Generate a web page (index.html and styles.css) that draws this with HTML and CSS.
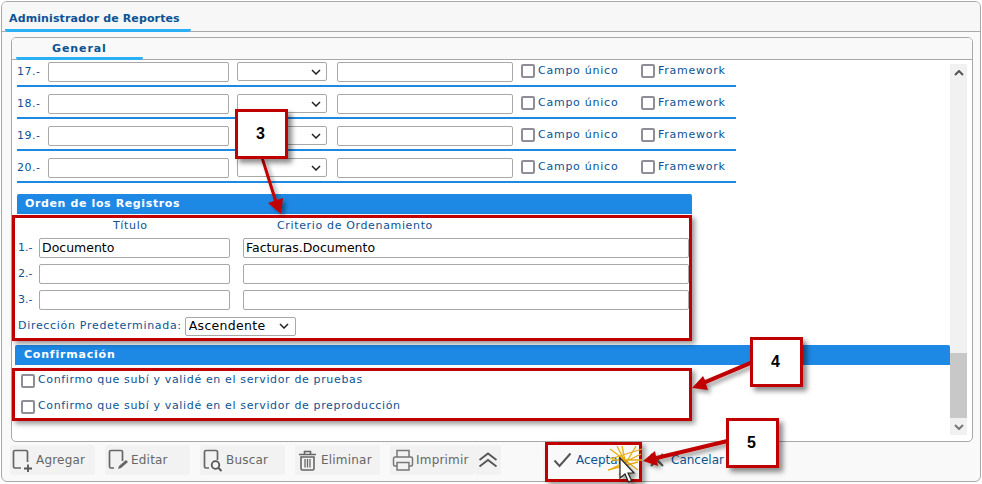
FILE: index.html
```html
<!DOCTYPE html>
<html lang="es">
<head>
<meta charset="utf-8">
<title>Administrador de Reportes</title>
<link rel="stylesheet" href="styles.css">
</head>
<body>
<div class="app">
  <div class="titlebar"><span class="tab-main">Administrador de Reportes</span></div>
  <div class="panel">
    <div class="tabs"><span class="tab-sub">General</span></div>
    <div class="scrollarea">
      <div class="content">
        <div class="field-rows">
          <div class="frow"><span class="num">17.-</span><input class="in-a"><select class="sel"></select><input class="in-b"><label class="chk chk1"><i></i>Campo único</label><label class="chk"><i></i>Framework</label></div>
          <div class="frow"><span class="num">18.-</span><input class="in-a"><select class="sel"></select><input class="in-b"><label class="chk chk1"><i></i>Campo único</label><label class="chk"><i></i>Framework</label></div>
          <div class="frow"><span class="num">19.-</span><input class="in-a"><select class="sel"></select><input class="in-b"><label class="chk chk1"><i></i>Campo único</label><label class="chk"><i></i>Framework</label></div>
          <div class="frow"><span class="num">20.-</span><input class="in-a"><select class="sel"></select><input class="in-b"><label class="chk chk1"><i></i>Campo único</label><label class="chk"><i></i>Framework</label></div>
        </div>
        <div class="sec sec-order">Orden de los Registros</div>
        <div class="order-head"><span class="oh1">Título</span><span class="oh2">Criterio de Ordenamiento</span></div>
        <div class="orow"><span class="onum">1.-</span><input class="o1" value="Documento"><input class="o2" value="Facturas.Documento"></div>
        <div class="orow"><span class="onum">2.-</span><input class="o1"><input class="o2"></div>
        <div class="orow"><span class="onum">3.-</span><input class="o1"><input class="o2"></div>
        <div class="dir"><span>Dirección Predeterminada:</span><select class="dirsel"><option>Ascendente</option></select></div>
        <div class="sec sec-conf">Confirmación</div>
        <label class="conf"><i></i>Confirmo que subí y validé en el servidor de pruebas</label>
        <label class="conf"><i></i>Confirmo que subí y validé en el servidor de preproducción</label>
      </div>
      <div class="scrollbar">
        <div class="sb-btn"><svg width="10" height="6" viewBox="0 0 10 6"><path d="M1 5l4-4 4 4" fill="none" stroke="#555" stroke-width="2"/></svg></div>
        <div class="sb-track"><div class="sb-thumb"></div></div>
        <div class="sb-btn"><svg width="10" height="6" viewBox="0 0 10 6"><path d="M1 1l4 4 4-4" fill="none" stroke="#777" stroke-width="2"/></svg></div>
      </div>
    </div>
  </div>
  <div class="toolbar">
    <div class="tool"><svg width="22" height="24" viewBox="0 0 22 24"><path d="M9 20H3a1.500 1.500 0 0 1-1.500-1.500V4A1.500 1.500 0 0 1 3 2.500h11A1.500 1.500 0 0 1 15.500 4v10" fill="none" stroke="#666" stroke-width="1.700"/><path d="M12 20.500h8M16 16.500v8" stroke="#555" stroke-width="1.800"/></svg><span>Agregar</span></div>
    <div class="tool"><svg width="22" height="24" viewBox="0 0 22 24"><path d="M7 20H4a1.500 1.500 0 0 1-1.500-1.500V4A1.500 1.500 0 0 1 4 2.500h10A1.500 1.500 0 0 1 15.500 4v9" fill="none" stroke="#666" stroke-width="1.700"/><path d="M11 21l1-3 7-6 2 2-7 6z" fill="#666"/></svg><span>Editar</span></div>
    <div class="tool"><svg width="22" height="24" viewBox="0 0 22 24"><path d="M7 20H4a1.500 1.500 0 0 1-1.500-1.500V4A1.500 1.500 0 0 1 4 2.500h10A1.500 1.500 0 0 1 15.500 4v8" fill="none" stroke="#666" stroke-width="1.700"/><circle cx="13.500" cy="17" r="3.800" fill="none" stroke="#555" stroke-width="1.800"/><path d="M16.500 20l3 3" stroke="#555" stroke-width="2"/></svg><span>Buscar</span></div>
    <div class="tool"><svg width="22" height="24" viewBox="0 0 22 24"><path d="M2 6.500h17M7.500 6V3.500h6V6" fill="none" stroke="#666" stroke-width="1.600"/><path d="M4 9h13v11.500a1.500 1.500 0 0 1-1.500 1.500h-10A1.500 1.500 0 0 1 4 20.500z" fill="none" stroke="#666" stroke-width="1.600"/><path d="M8 11v8.500M10.500 11v8.500M13 11v8.500" stroke="#666" stroke-width="1.300"/></svg><span>Eliminar</span></div>
    <div class="tool tool-print"><svg width="22" height="24" viewBox="0 0 22 24"><path d="M5 9V2.500h12V9" fill="none" stroke="#777" stroke-width="1.500"/><path d="M5 18H3a1.500 1.500 0 0 1-1.500-1.500v-6A1.500 1.500 0 0 1 3 9h16a1.500 1.500 0 0 1 1.500 1.500v6A1.500 1.500 0 0 1 19 18h-2" fill="none" stroke="#777" stroke-width="1.500"/><path d="M5 14.500h12v7.500H5z" fill="none" stroke="#777" stroke-width="1.500"/></svg><span>Imprimir</span></div>
    <div class="tool tool-more"><svg width="20" height="16" viewBox="0 0 20 16"><path d="M1.500 8l8.500-6.500L18.500 8M1.500 14.500L10 8l8.500 6.500" fill="none" stroke="#555" stroke-width="1.800"/></svg></div>
    <div class="actions">
      <div class="act"><svg width="20" height="16" viewBox="0 0 20 16"><path d="M1.500 8.500l5 5.500 11-12.500" fill="none" stroke="#555" stroke-width="2"/></svg><span>Aceptar</span></div>
      <div class="act act-cancel"><svg width="16" height="16" viewBox="0 0 16 16"><path d="M2 2l12 12M14 2L2 14" fill="none" stroke="#555" stroke-width="2"/></svg><span>Cancelar</span></div>
    </div>
  </div>
</div>

<div class="mark mark-3"></div>
<div class="mark mark-4"></div>
<div class="mark mark-5"></div>
<svg class="overlay" width="982" height="484" viewBox="0 0 982 484">
  <defs><filter id="sh" x="-30%" y="-30%" width="170%" height="170%"><feDropShadow dx="3" dy="3" stdDeviation="2" flood-color="#000" flood-opacity=".4"/></filter></defs>
  <g filter="url(#sh)" fill="#c00000">
    <path d="M261 159L264 159L277 200L283 198L281 214L268 203L274 201Z"/>
    <path d="M750 361L751 365L706 384L708 390L692 388L703 376L705 380Z"/>
    <path d="M727 439L728 443L657 460L658 466L643 461L655 451L656 456Z"/>
  </g>
  <g stroke="#e8ad12" stroke-width="1.300">
    <path d="M610 449l28 21M622 446l6 30M636 446l-17 29M641 454l-30 15M612 460h30M617 446l14 28M642 449l-32 10M608 470l30-8"/>
  </g>
  <path d="M620 458v20l5-4 3.500 8 3-1.500-3.500-7.500h6z" fill="#fff" stroke="#222" stroke-width="1.200" filter="url(#sh)"/>
</svg>
<div class="callout c3">3</div>
<div class="callout c4">4</div>
<div class="callout c5">5</div>
</body>
</html>
```
FILE: styles.css
```css
* { box-sizing: border-box; }
html, body { margin: 0; padding: 0; }
body { width: 982px; height: 484px; overflow: hidden; background: #fff; position: relative; font-family: "DejaVu Sans", Verdana, sans-serif; font-size: 11px; color: #0b5394; }
input, select { font-family: "DejaVu Sans", Verdana, sans-serif; margin: 0; background: #fff; outline: none; flex: none; }
select { appearance: none; background: #fff url("data:image/svg+xml,%3Csvg xmlns='http://www.w3.org/2000/svg' width='10' height='6'%3E%3Cpath d='M1 1l4 4 4-4' fill='none' stroke='%23222' stroke-width='1.500'/%3E%3C/svg%3E") no-repeat right 5px center; }

.app { margin: 1px 0 0 1px; width: 980px; height: 481px; border: 1px solid #a8a8a8; border-radius: 6px; background: #f9f9f9; display: flex; flex-direction: column; overflow: hidden; }
.titlebar { height: 30px; flex: none; border-bottom: 1px solid #a8a8a8; background: #f7f7f7; padding-left: 3px; display: flex; align-items: flex-end; }
.tab-main { width: 186px; height: 29px; margin-bottom: -1px; padding: 9px 0 0 4px; font-weight: bold; font-size: 11px; letter-spacing: .12px; color: #0b5394; border-bottom: 3px solid #29b0f5; border-radius: 0 0 3px 3px; white-space: nowrap; }

.panel { margin: 5px 7px 0 9px; height: 405px; flex: none; border: 1px solid #a8a8a8; border-radius: 5px; background: #fff; display: flex; flex-direction: column; overflow: hidden; }
.tabs { height: 22px; flex: none; border-bottom: 1px solid #a8a8a8; background: #f9f9f9; padding-left: 4px; }
.tab-sub { display: block; width: 127px; height: 22px; padding: 4px 0 0 36px; font-weight: bold; font-size: 11px; letter-spacing: .9px; color: #0b5394; border-bottom: 3px solid #29b0f5; border-radius: 0 0 3px 3px; }

.scrollarea { flex: 1; min-height: 0; position: relative; overflow: hidden; display: flex; padding-top: 4px; }
.content { width: 938px; flex: none; height: 400px; margin-top: -4px; }
.scrollbar { width: 17px; flex: none; height: 371px; display: flex; flex-direction: column; background: #f1f1f1; }
.sb-btn { height: 17px; flex: none; display: flex; align-items: center; justify-content: center; }
.sb-track { flex: 1; display: flex; flex-direction: column; justify-content: flex-end; }
.sb-thumb { height: 65px; background: #c8c8c8; }

.field-rows { width: 719px; margin-left: 5px; margin-top: -5px; }
.frow { height: 32px; border-bottom: 2px solid #1e88e5; display: flex; align-items: flex-start; padding-top: 7px; }
.num { width: 31px; line-height: 18px; letter-spacing: .5px; flex: none; margin-top: 1px; }
.frow input, .frow select { height: 20px; border: 1px solid #a8a8a8; border-radius: 2px; }
.in-a { width: 181px; }
.sel { width: 90px; margin-left: 8px !important; height: 19px !important; font-size: 12px; color: #000; }
.in-b { width: 176px; margin-left: 10px !important; }
.chk { display: flex; align-items: flex-start; line-height: 16px; letter-spacing: .75px; white-space: nowrap; margin-top: 1px; }
.chk i, .conf i { display: block; width: 14px; height: 14px; flex: none; border: 2px solid #8e8e98; border-radius: 2px; background: #fff; }
.chk i { margin: 1px 3px 0 -1px; }
.chk1 { width: 120px; margin-left: 9px; }

.sec { height: 20px; background: #1e88e5; color: #fff; font-weight: bold; font-size: 11px; letter-spacing: .8px; line-height: 19px; border-radius: 2px 2px 0 0; }
.sec-order { width: 675px; margin: 11px 0 0 5px; padding-left: 8px; letter-spacing: .62px; }
.order-head { height: 24px; padding-top: 5px; line-height: 14px; letter-spacing: .65px; display: flex; }
.oh1 { margin-left: 101px; width: 164px; }
.oh2 { white-space: nowrap; }
.orow { height: 26px; display: flex; align-items: flex-start; margin-left: 6px; }
.onum { width: 21px; line-height: 20px; flex: none; }
.orow input { height: 20px; border: 1px solid #a8a8a8; border-radius: 2px; font-size: 12.500px; color: #000; padding: 0 2px 2px; }
.o1 { width: 191px; }
.o2 { width: 446px; margin-left: 13px !important; }
.dir { display: flex; align-items: center; margin: 0 0 0 6px; height: 20px; letter-spacing: .69px; white-space: nowrap; }
.dir span { margin-top: -2px; }
.dirsel { width: 111px; height: 19px; margin-left: 3px; padding: 0 0 2px 3px; font-size: 12.500px; color: #000; border: 1px solid #a8a8a8; border-radius: 2px; letter-spacing: .3px; background-position: right 6px center; }
.sec-conf { width: 935px; margin: 9px 0 0 3px; padding-left: 9px; }
.conf { display: flex; align-items: flex-start; height: 26px; margin-left: 9px; line-height: 14px; letter-spacing: .64px; white-space: nowrap; }
.conf i { margin: 1px 3px 0 0; }
.conf:first-of-type { margin-top: 8px; }

.toolbar { flex: 1; display: flex; align-items: flex-start; padding: 3px 0 0 8px; position: relative; }
.tool { width: 85px; height: 30px; margin-right: 10px; flex: none; background: #f2f2f2; border-radius: 3px; display: flex; align-items: center; padding-left: 2px; color: #666; font-size: 12px; letter-spacing: .2px; gap: 2px; white-space: nowrap; }
.tool-print { margin-right: 0; }
.tool-more { width: 26px; margin-right: 0; padding-left: 3px; }
.actions { display: flex; align-items: center; height: 30px; margin-left: 52px; }
.act { display: flex; align-items: center; gap: 3px; font-size: 12px; color: #0b5394; width: 96px; flex: none; }
.act-cancel { gap: 6px; }

.mark { position: absolute; border: 3px solid #c00000; box-shadow: 3px 3px 5px rgba(0,0,0,.4); }
.mark-3 { left: 12px; top: 215px; width: 680px; height: 126px; }
.mark-4 { left: 12px; top: 368px; width: 680px; height: 53px; }
.mark-5 { left: 545px; top: 442px; width: 97px; height: 40px; }
.overlay { position: absolute; left: 0; top: 0; pointer-events: none; }
.callout { position: absolute; width: 53px; height: 50px; padding-right: 2px; background: #fff; border: 3px solid #c00000; box-shadow: 4px 4px 5px rgba(0,0,0,.45); color: #000; font: bold 16px/44px "Liberation Sans", Arial, sans-serif; text-align: center; }
.c3 { left: 235px; top: 109px; }
.c4 { left: 750px; top: 337px; }
.c5 { left: 726px; top: 418px; }
```
